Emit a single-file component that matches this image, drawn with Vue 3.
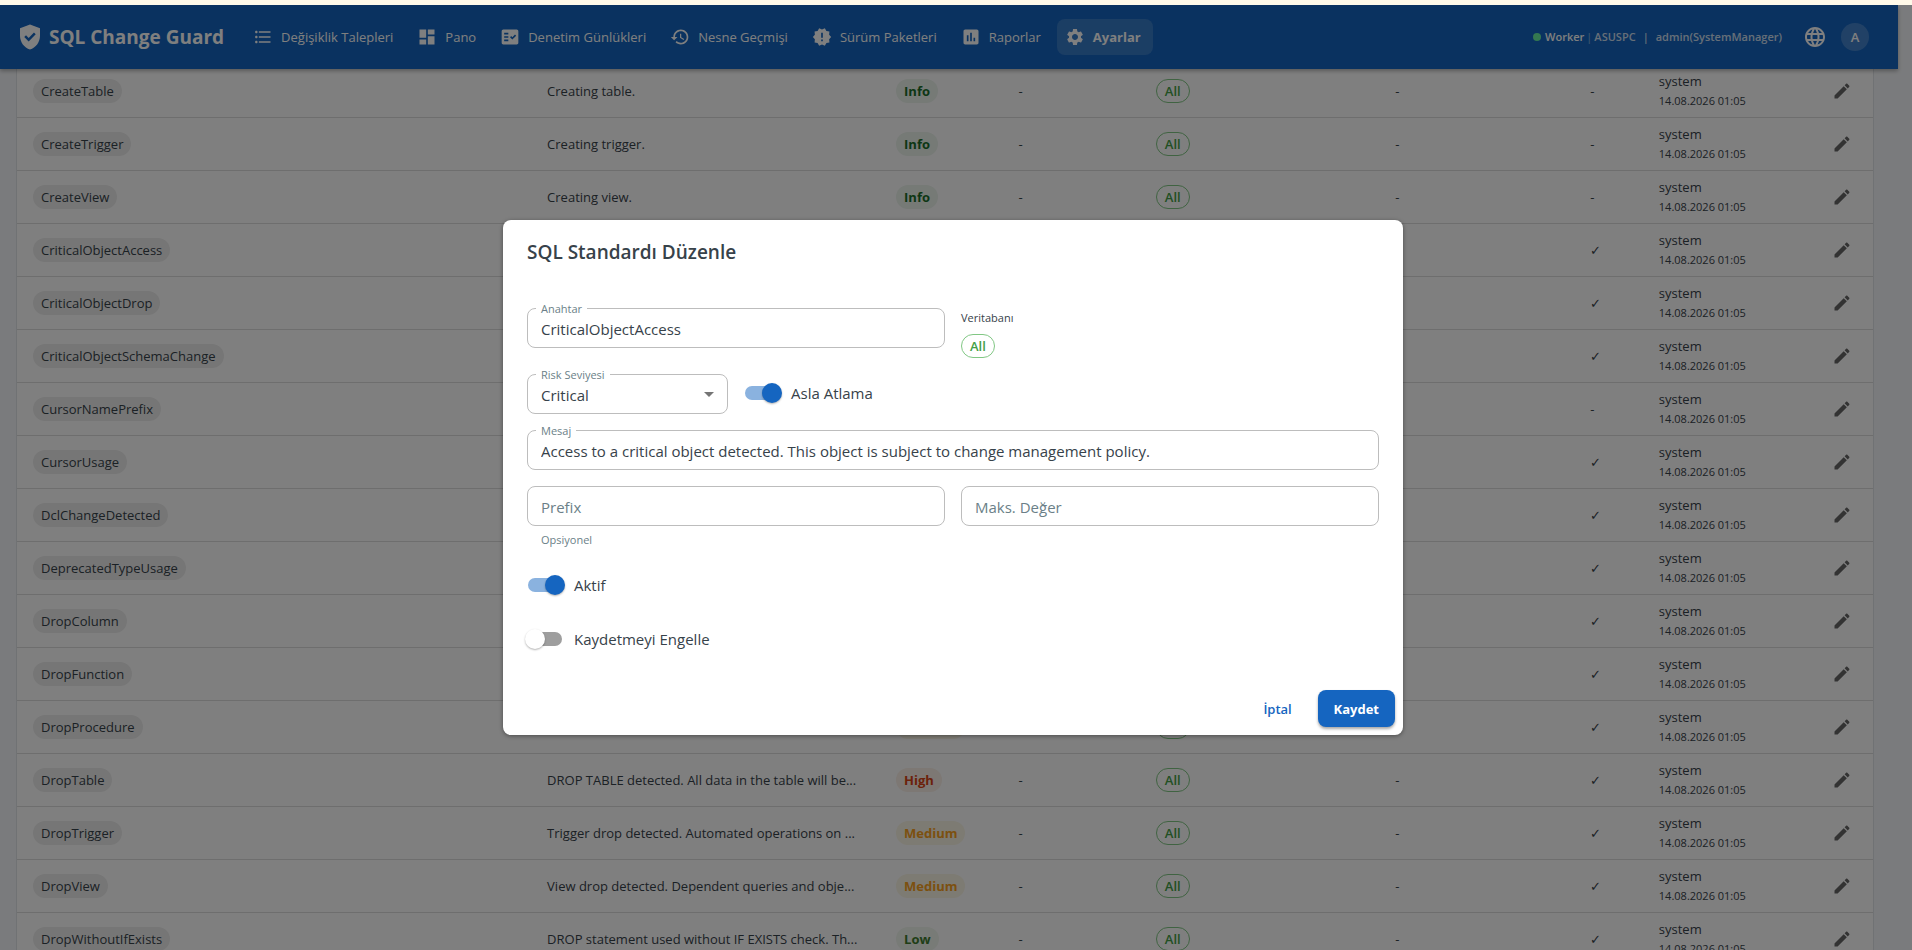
<script setup>
import { ref, reactive } from 'vue'

const navItems = [
  { text: 'Değişiklik Talepleri', icon: 'M4 10.5c-.83 0-1.5.67-1.5 1.5s.67 1.5 1.5 1.5 1.5-.67 1.5-1.5-.67-1.5-1.5-1.5zm0-6c-.83 0-1.5.67-1.5 1.5S3.17 7.5 4 7.5 5.5 6.83 5.5 6 4.83 4.5 4 4.5zm0 12c-.83 0-1.5.68-1.5 1.5s.68 1.5 1.5 1.5 1.5-.68 1.5-1.5-.67-1.5-1.5-1.5zM7 19h14v-2H7v2zm0-6h14v-2H7v2zm0-8v2h14V5H7z' },
  { text: 'Pano', icon: 'M3 13h8V3H3v10zm0 8h8v-6H3v6zm10 0h8V11h-8v10zm0-18v6h8V3h-8z' },
  { text: 'Denetim Günlükleri', icon: 'M20 3H4c-1.1 0-2 .9-2 2v14c0 1.1.9 2 2 2h16c1.1 0 2-.9 2-2V5c0-1.1-.9-2-2-2zM10 17H5v-2h5v2zm0-4H5v-2h5v2zm0-4H5V7h5v2zm4.82 6L12 12.16l1.41-1.41 1.41 1.42L17.99 9l1.42 1.42L14.82 15z' },
  { text: 'Nesne Geçmişi', icon: 'M13 3c-4.97 0-9 4.03-9 9H1l3.89 3.89.07.14L9 12H6c0-3.87 3.13-7 7-7s7 3.13 7 7-3.13 7-7 7c-1.93 0-3.68-.79-4.94-2.06l-1.42 1.42C8.27 19.99 10.51 21 13 21c4.97 0 9-4.03 9-9s-4.03-9-9-9zm-1 5v5l4.28 2.54.72-1.21-3.5-2.08V8H12z' },
  { text: 'Sürüm Paketleri', icon: 'M23 12l-2.44-2.78.34-3.68-3.61-.82-1.89-3.18L12 3 8.6 1.54 6.71 4.72l-3.61.81.34 3.68L1 12l2.44 2.78-.34 3.69 3.61.82 1.89 3.18L12 21l3.4 1.46 1.89-3.18 3.61-.82-.34-3.68L23 12zm-10 5h-2v-2h2v2zm0-4h-2V7h2v6z' },
  { text: 'Raporlar', icon: 'M19 3H5c-1.1 0-2 .9-2 2v14c0 1.1.9 2 2 2h14c1.1 0 2-.9 2-2V5c0-1.1-.9-2-2-2zM9 17H7v-7h2v7zm4 0h-2V7h2v10zm4 0h-2v-4h2v4z' },
  { text: 'Ayarlar', active: true, icon: 'M19.14 12.94c.04-.3.06-.61.06-.94 0-.32-.02-.64-.07-.94l2.03-1.58c.18-.14.23-.41.12-.61l-1.92-3.32c-.12-.22-.37-.29-.59-.22l-2.39.96c-.5-.38-1.03-.7-1.62-.94l-.36-2.54c-.04-.24-.24-.41-.48-.41h-3.84c-.24 0-.43.17-.47.41l-.36 2.54c-.59.24-1.13.57-1.62.94l-2.39-.96c-.22-.08-.47 0-.59.22L2.74 8.87c-.12.21-.08.47.12.61l2.03 1.58c-.05.3-.09.63-.09.94s.02.64.07.94l-2.03 1.58c-.18.14-.23.41-.12.61l1.92 3.32c.12.22.37.29.59.22l2.39-.96c.5.38 1.03.7 1.62.94l.36 2.54c.05.24.24.41.48.41h3.84c.24 0 .44-.17.47-.41l.36-2.54c.59-.24 1.13-.56 1.62-.94l2.39.96c.22.08.47 0 .59-.22l1.92-3.32c.12-.22.07-.47-.12-.61l-2.01-1.58zM12 15.6c-1.98 0-3.6-1.62-3.6-3.6s1.62-3.6 3.6-3.6 3.6 1.62 3.6 3.6-1.62 3.6-3.6 3.6z' }
]

const rules = ref([
  { key: 'CreateTable', message: 'Creating table.', risk: 'Info' },
  { key: 'CreateTrigger', message: 'Creating trigger.', risk: 'Info' },
  { key: 'CreateView', message: 'Creating view.', risk: 'Info' },
  { key: 'CriticalObjectAccess', never: true },
  { key: 'CriticalObjectDrop', never: true },
  { key: 'CriticalObjectSchemaChange', never: true },
  { key: 'CursorNamePrefix' },
  { key: 'CursorUsage', never: true },
  { key: 'DclChangeDetected', never: true },
  { key: 'DeprecatedTypeUsage', never: true },
  { key: 'DropColumn', never: true },
  { key: 'DropFunction', never: true },
  { key: 'DropProcedure', risk: 'Medium', never: true },
  { key: 'DropTable', message: 'DROP TABLE detected. All data in the table will be...', risk: 'High', never: true },
  { key: 'DropTrigger', message: 'Trigger drop detected. Automated operations on ...', risk: 'Medium', never: true },
  { key: 'DropView', message: 'View drop detected. Dependent queries and obje...', risk: 'Medium', never: true },
  { key: 'DropWithoutIfExists', message: 'DROP statement used without IF EXISTS check. Th...', risk: 'Low', never: true }
])

const form = reactive({
  key: 'CriticalObjectAccess',
  risk: 'Critical',
  neverSkip: true,
  message: 'Access to a critical object detected. This object is subject to change management policy.',
  prefix: '',
  max: '',
  active: true,
  blockSave: false
})
</script>

<template>
<div class="shell">
  <div class="strip"></div>

  <div class="page">
    <header class="appbar">
      <div class="brand">
        <svg class="brand__icon" viewBox="0 0 24 24"><path d="M12 2L4 5v6.09c0 5.05 3.41 9.76 8 10.91 4.59-1.15 8-5.86 8-10.91V5l-8-3zm-1.06 13.54L7.4 12l1.41-1.41 2.12 2.12 4.24-4.24 1.41 1.41-5.64 5.66z" /></svg>
        <span>SQL Change Guard</span>
      </div>
      <nav class="nav">
        <a
          v-for="item in navItems"
          :key="item.text"
          href="#"
          class="nav__item"
          :class="{ 'nav__item--active': item.active }"
        >
          <svg viewBox="0 0 24 24"><path :d="item.icon" /></svg>
          <span>{{ item.text }}</span>
        </a>
      </nav>
      <div class="status">
        <span class="status__dot"></span>
        <span class="status__worker">Worker</span>
        <span class="status__bar">|</span>
        <span>ASUSPC</span>
        <span class="status__sep">|</span>
        <span>admin(SystemManager)</span>
      </div>
      <button class="round" aria-label="Dil">
        <svg viewBox="0 0 24 24"><path d="M11.99 2C6.47 2 2 6.48 2 12s4.47 10 9.99 10C17.52 22 22 17.52 22 12S17.52 2 11.99 2zm6.93 6h-2.95c-.32-1.25-.78-2.45-1.38-3.56 1.84.63 3.37 1.91 4.33 3.56zM12 4.04c.83 1.2 1.48 2.53 1.91 3.96h-3.82c.43-1.43 1.08-2.76 1.91-3.96zM4.26 14C4.1 13.36 4 12.69 4 12s.1-1.36.26-2h3.38c-.08.66-.14 1.32-.14 2s.06 1.34.14 2H4.26zm.82 2h2.95c.32 1.25.78 2.45 1.38 3.56-1.84-.63-3.37-1.9-4.33-3.56zm2.95-8H5.08c.96-1.66 2.49-2.93 4.33-3.56C8.81 5.55 8.35 6.75 8.03 8zM12 19.96c-.83-1.2-1.48-2.53-1.91-3.96h3.82c-.43 1.43-1.08 2.76-1.91 3.96zM14.34 14H9.66c-.09-.66-.16-1.32-.16-2s.07-1.35.16-2h4.68c.09.65.16 1.32.16 2s-.07 1.34-.16 2zm.25 5.56c.6-1.11 1.06-2.31 1.38-3.56h2.95c-.96 1.65-2.49 2.93-4.33 3.56zM16.36 14c.08-.66.14-1.32.14-2s-.06-1.34-.14-2h3.38c.16.64.26 1.31.26 2s-.1 1.36-.26 2h-3.38z" /></svg>
      </button>
      <button class="avatar">A</button>
    </header>

    <main class="content">
      <table class="grid">
        <colgroup>
          <col class="c-key">
          <col class="c-message">
          <col class="c-risk">
          <col class="c-prefix">
          <col class="c-db">
          <col class="c-max">
          <col class="c-never">
          <col class="c-updated">
          <col class="c-edit">
        </colgroup>
        <tbody>
          <tr v-for="rule in rules" :key="rule.key">
            <td><span class="chip">{{ rule.key }}</span></td>
            <td>{{ rule.message }}</td>
            <td><span v-if="rule.risk" class="chip chip--risk" :class="'chip--' + rule.risk.toLowerCase()">{{ rule.risk }}</span></td>
            <td>-</td>
            <td><span class="chip chip--outline">All</span></td>
            <td>-</td>
            <td>{{ rule.never ? '✓' : '-' }}</td>
            <td>
              <div>system</div>
              <div class="date">14.08.2026 01:05</div>
            </td>
            <td class="edit">
              <button class="edit__button" aria-label="Düzenle">
                <svg viewBox="0 0 24 24"><path d="M3 17.25V21h3.75L17.81 9.94l-3.75-3.75L3 17.25zM20.71 7.04c.39-.39.39-1.02 0-1.41l-2.34-2.34c-.39-.39-1.02-.39-1.41 0l-1.83 1.83 3.75 3.75 1.83-1.83z" /></svg>
              </button>
            </td>
          </tr>
        </tbody>
      </table>
    </main>

    <div class="overlay">
      <form class="dialog" role="dialog" aria-labelledby="dialog-title" @submit.prevent>
        <h2 id="dialog-title" class="dialog__title">SQL Standardı Düzenle</h2>

        <div class="dialog__content">
          <div class="row">
            <div class="field">
              <input id="key" v-model="form.key" type="text">
              <label for="key">Anahtar</label>
            </div>
            <div class="database">
              <span>Veritabanı</span>
              <span class="chip chip--outline">All</span>
            </div>
          </div>

          <div class="row row--risk">
            <div class="field">
              <select id="risk" v-model="form.risk">
                <option>Critical</option>
              </select>
              <label for="risk">Risk Seviyesi</label>
              <svg class="field__arrow" viewBox="0 0 24 24"><path d="M7 10l5 5 5-5z" /></svg>
            </div>
            <label class="switch">
              <input v-model="form.neverSkip" type="checkbox">
              <span>Asla Atlama</span>
            </label>
          </div>

          <div class="field">
            <input id="message" v-model="form.message" type="text">
            <label for="message">Mesaj</label>
          </div>

          <div class="row">
            <div class="field" :class="{ 'field--empty': !form.prefix }">
              <input id="prefix" v-model="form.prefix" type="text">
              <label for="prefix">Prefix</label>
              <p class="field__helper">Opsiyonel</p>
            </div>
            <div class="field" :class="{ 'field--empty': !form.max }">
              <input id="max" v-model="form.max" type="text">
              <label for="max">Maks. Değer</label>
            </div>
          </div>

          <label class="switch">
            <input v-model="form.active" type="checkbox">
            <span>Aktif</span>
          </label>
          <label class="switch">
            <input v-model="form.blockSave" type="checkbox">
            <span>Kaydetmeyi Engelle</span>
          </label>
        </div>

        <div class="dialog__actions">
          <button type="button" class="btn">İptal</button>
          <button type="submit" class="btn btn--primary">Kaydet</button>
        </div>
      </form>
    </div>
  </div>
</div>
</template>

<style>
body {
  overflow: hidden;
}
</style>

<style scoped>
.shell {
  display: flex;
  flex-direction: column;
  height: 100vh;
  font: 13px/20px "Open Sans", "Noto Sans", sans-serif;
  color: #37424a;
}
.shell * {
  box-sizing: border-box;
}
button,
input,
select {
  font: inherit;
  color: inherit;
}
svg {
  display: block;
  fill: currentColor;
}

.strip {
  flex: none;
  height: 5px;
  background: #fff9e9;
}
.page {
  position: relative;
  flex: 1;
  min-height: 0;
  overflow: hidden;
  background: #f5f7fa;
}

/* top bar */
.appbar {
  position: relative;
  z-index: 1;
  display: flex;
  align-items: center;
  height: 64px;
  margin-right: 14px;
  padding: 0 29px 0 15px;
  background: #1565c0;
  color: #fff;
  box-shadow: 0 2px 4px rgba(0, 0, 0, .3);
}
.brand {
  display: flex;
  align-items: center;
  gap: 4px;
  margin-right: 21px;
  font-size: 19px;
  font-weight: 700;
  white-space: nowrap;
}
.brand__icon {
  width: 30px;
  height: 30px;
}
.nav {
  display: flex;
  flex: 1;
  gap: 4px;
}
.nav__item {
  display: flex;
  align-items: center;
  gap: 8px;
  height: 36px;
  padding: 0 12px 0 8px;
  border-radius: 8px;
  color: #fff;
  font-weight: 500;
  text-decoration: none;
  white-space: nowrap;
}
.nav__item svg {
  width: 20px;
  height: 20px;
}
.nav__item--active {
  background: rgba(255, 255, 255, .15);
  font-weight: 700;
}
.status {
  display: flex;
  align-items: center;
  color: rgba(255, 255, 255, .8);
  font-size: 11px;
  font-weight: 600;
  white-space: nowrap;
}
.status__dot {
  width: 8px;
  height: 8px;
  margin-right: 4px;
  border-radius: 50%;
  background: #69f0a0;
}
.status__worker {
  color: #fff;
}
.status__bar {
  margin: 0 2px;
  opacity: .5;
}
.status__sep {
  margin: 0 7px;
}
.round {
  margin: 0 14px 0 21px;
  padding: 0;
  border: 0;
  background: none;
}
.round svg {
  width: 24px;
  height: 24px;
}
.avatar {
  width: 28px;
  height: 28px;
  padding: 0;
  border: 0;
  border-radius: 50%;
  background: rgba(255, 255, 255, .2);
  font-weight: 600;
}

/* rule table, scrolled a little under the bar */
.content {
  margin: -4px 38px 0 16px;
}
.grid {
  width: 100%;
  border: 1px solid #e0e4e8;
  border-top: 0;
  border-spacing: 0;
  table-layout: fixed;
  background: #fff;
}
.c-key { width: 27.7%; }
.c-message { width: 18.8%; }
.c-risk { width: 6.6%; }
.c-prefix { width: 7.4%; }
.c-db { width: 12.9%; }
.c-max { width: 10.5%; }
.c-never { width: 3.7%; }
.c-updated { width: 8.4%; }
.grid td {
  height: 53px;
  padding: 6px 16px;
  border-bottom: 1px solid #dcdcdc;
  white-space: nowrap;
}
.date {
  font-size: 11px;
}
.grid .edit {
  text-align: right;
}
.edit__button {
  padding: 5px;
  border: 0;
  background: none;
  color: rgba(0, 0, 0, .6);
  vertical-align: middle;
}
.edit__button svg {
  width: 20px;
  height: 20px;
}

.chip {
  display: inline-flex;
  align-items: center;
  height: 24px;
  padding: 0 8px;
  border-radius: 12px;
  background: #ededed;
  font-weight: 500;
  vertical-align: middle;
}
.chip--risk { font-weight: 700; }
.chip--info { background: #ecf4ed; color: #1b6e2b; }
.chip--low { background: #f1f6ee; color: #3f7d2f; }
.chip--medium { background: #fbf6e6; color: #f9a020; }
.chip--high { background: #faf0e8; color: #d84315; }
.chip--outline {
  border: 1px solid #81c784;
  background: none;
  color: #43a047;
  font-weight: 600;
}

/* edit dialog */
.overlay {
  position: absolute;
  inset: 0;
  z-index: 2;
  display: flex;
  align-items: center;
  justify-content: center;
  padding-right: 6px;
  background: rgba(0, 0, 0, .5);
}
.dialog {
  width: 100%;
  max-width: 900px;
  border-radius: 8px;
  background: #fff;
  box-shadow: 0 1px 4px rgba(0, 0, 0, .4);
  font-size: 15px;
}
.dialog__title {
  margin: 0;
  padding: 16px 24px;
  font-size: 19px;
  font-weight: 600;
  line-height: 32px;
}
.dialog__content {
  display: flex;
  flex-direction: column;
  align-items: stretch;
  gap: 16px;
  padding: 24px;
}
.row {
  display: grid;
  grid-template-columns: 1fr 1fr;
  gap: 16px;
}
.row--risk {
  grid-template-columns: 201px 1fr;
}
.field {
  position: relative;
}
.field input,
.field select {
  display: block;
  width: 100%;
  height: 40px;
  padding: 2px 13px 0;
  border: 1px solid #bdbdbd;
  border-radius: 8px;
  outline: 0;
  background: #fff;
  appearance: none;
}
.field label {
  position: absolute;
  top: -8px;
  left: 9px;
  padding: 0 5px;
  background: #fff;
  color: #6b7f88;
  font-size: 11px;
  line-height: 18px;
  pointer-events: none;
}
.field--empty label {
  top: 12px;
  font-size: 15px;
}
.field__arrow {
  position: absolute;
  top: 8px;
  right: 7px;
  width: 24px;
  height: 24px;
  color: #757575;
  pointer-events: none;
}
.field__helper {
  margin: 4px 14px 0;
  color: #6b7f88;
  font-size: 11px;
}
.database {
  display: flex;
  flex-direction: column;
  align-items: flex-start;
  gap: 6px;
  font-size: 11px;
}
.database .chip {
  font-size: 13px;
}
.switch {
  display: flex;
  align-items: center;
  align-self: flex-start;
  height: 38px;
  margin-left: -11px;
}
.switch input {
  position: relative;
  width: 34px;
  height: 14px;
  margin: 0 12px;
  border-radius: 7px;
  background: #9e9e9e;
  appearance: none;
}
.switch input::after {
  content: "";
  position: absolute;
  top: -3px;
  left: -3px;
  width: 20px;
  height: 20px;
  border-radius: 50%;
  background: #fff;
  box-shadow: 0 1px 2px rgba(0, 0, 0, .3);
}
.switch input:checked {
  background: #8ab2df;
}
.switch input:checked::after {
  left: 17px;
  background: #1565c0;
}
.dialog__actions {
  display: flex;
  justify-content: flex-end;
  gap: 8px;
  padding: 8px;
}
.btn {
  min-width: 64px;
  height: 37px;
  padding: 0 16px;
  border: 0;
  border-radius: 8px;
  background: none;
  color: #1565c0;
  font-size: 13px;
  font-weight: 600;
}
.btn--primary {
  background: #1565c0;
  color: #fff;
  font-weight: 700;
  box-shadow: 0 2px 3px rgba(0, 0, 0, .35);
}
</style>
